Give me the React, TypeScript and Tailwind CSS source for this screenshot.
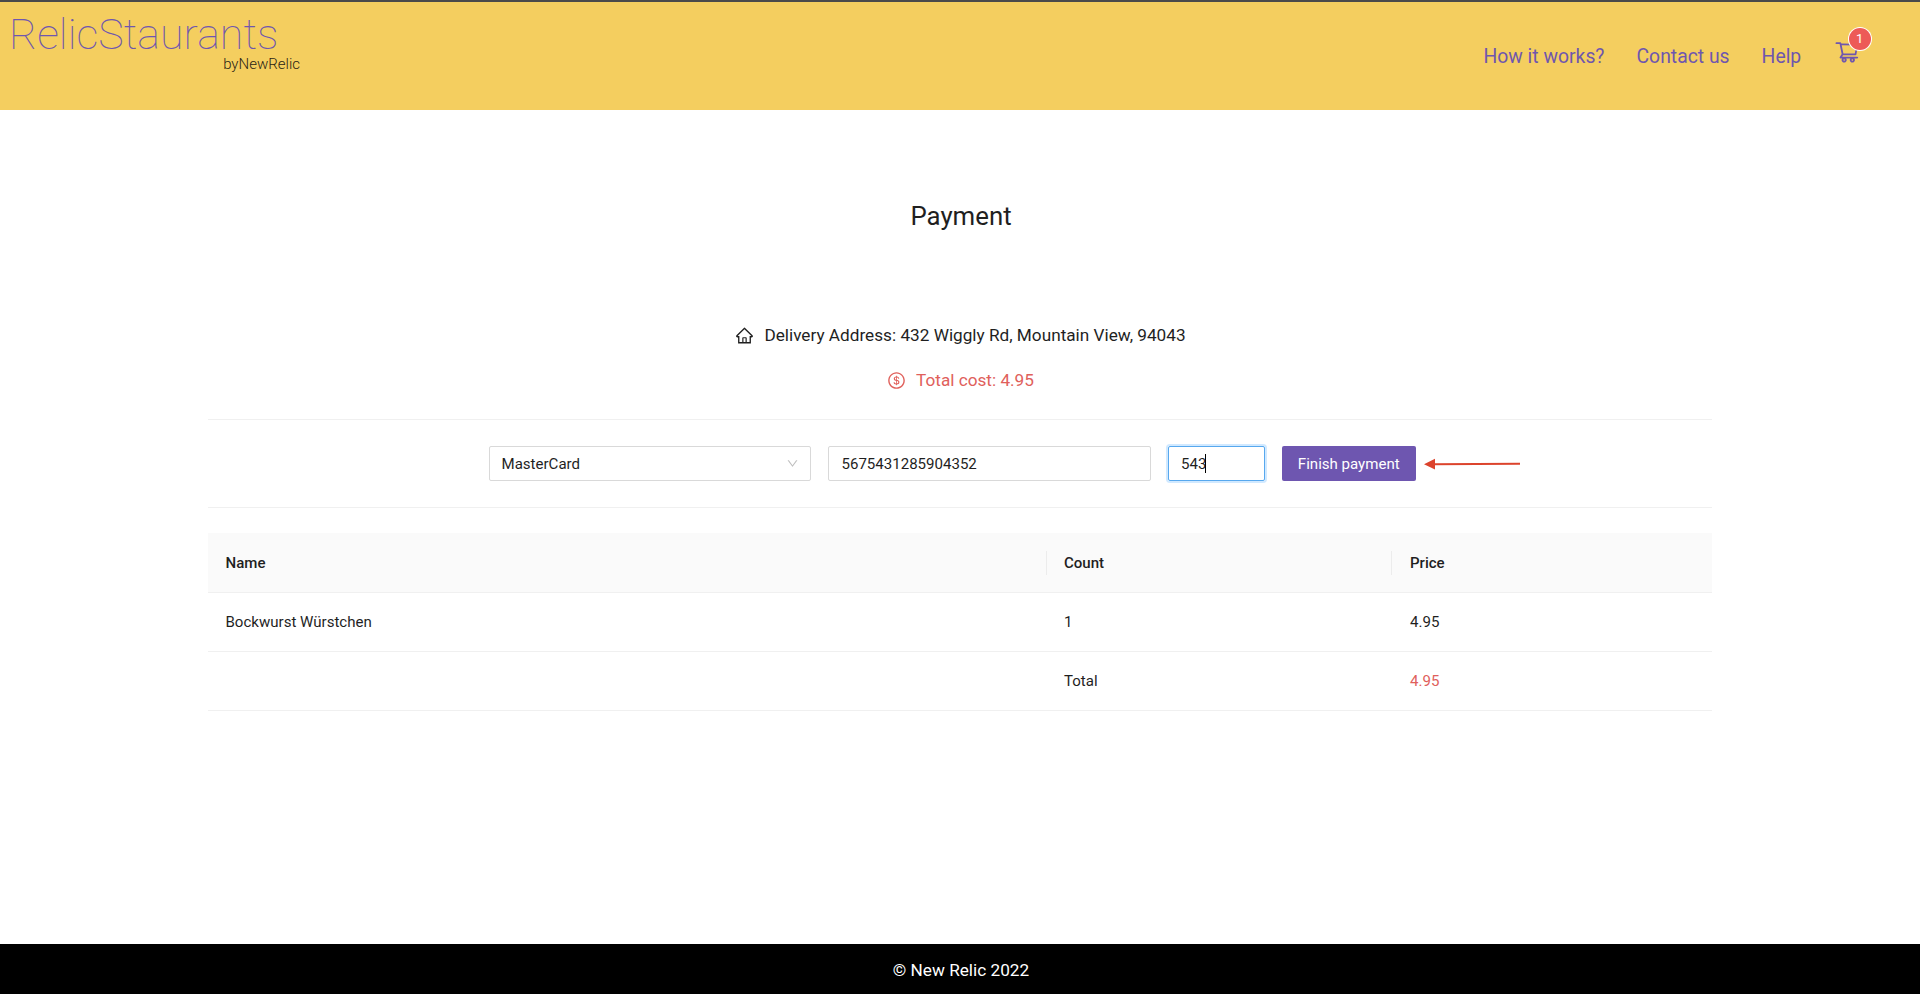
import React from "react";
import {
  AiOutlineDollar,
  AiOutlineDown,
  AiOutlineHome,
  AiOutlineShoppingCart,
} from "react-icons/ai";

const navLinks = ["How it works?", "Contact us", "Help"];

function Header() {
  return (
    <header className="flex h-[110px] justify-between border-t-2 border-[#4a4a4a] bg-[#f4ce5f]">
      <div className="flex w-[300px] flex-col pl-[9px] pt-[7px]">
        <div className="h-[50px] whitespace-nowrap text-[43px] leading-[50px] font-thin text-[#6f56ae]">
          RelicStaurants
        </div>
        <div className="-mt-[4px] h-[18px] text-right text-[15px] leading-[18px] font-light text-[#2b2415]">
          byNewRelic
        </div>
      </div>
      <nav className="flex items-center gap-[32px] pr-[60px] text-[19.35px] leading-6 text-[#6f56ae]">
        {navLinks.map((label) => (
          <a key={label} className="-ml-px mr-px whitespace-nowrap pt-[2px]">
            {label}
          </a>
        ))}
        <div className="relative -mt-[8px]">
          <AiOutlineShoppingCart className="h-[25.8px] w-[25.8px]" />
          <span className="absolute -top-[11px] left-[14.5px] flex h-[22px] w-[22px] items-center justify-center rounded-full bg-[#ed5a57] text-[12.9px] leading-none text-white ring-1 ring-white">
            1
          </span>
        </div>
      </nav>
    </header>
  );
}

function PaymentForm() {
  return (
    <form className="ml-[280.5px] flex h-[87px] items-center gap-[17px] text-[15.05px]">
      <div className="flex h-[34.4px] w-[322.5px] items-center justify-between rounded-[2px] border border-[#d9d9d9] pl-[12px] pr-[11px]">
        <span className="pt-px">MasterCard</span>
        <AiOutlineDown className="mt-px h-[13px] w-[13px] text-[#bfbfbf]" />
      </div>
      <div className="flex h-[34.4px] w-[322.5px] items-center rounded-[2px] border border-[#d9d9d9] pl-[12.5px] pt-px">
        5675431285904352
      </div>
      <div className="flex h-[34.4px] w-[97px] items-center rounded-[2px] border border-[#57a8ee] pl-[12.5px] pt-px shadow-[0_0_0_2px_rgba(24,144,255,0.2)]">
        543
        <span className="-ml-px h-[19px] w-px bg-black" />
      </div>
      <button
        type="button"
        className="h-[34.4px] w-[134.5px] rounded-[2px] bg-[#6e56b0] pt-px text-white"
      >
        Finish payment
      </button>
      <svg className="-ml-[9px] h-[12px] w-[97px]" viewBox="0 0 97 12">
        <path d="M0 6.2L11 0.8V11.6Z" fill="#dc432c" />
        <path d="M9 6.2L96 5.7" stroke="#dc432c" strokeWidth="2" fill="none" />
      </svg>
    </form>
  );
}

function OrderTable() {
  const columns = "grid grid-cols-[838.5px_345.5px_320px] items-center";
  return (
    <div className="mt-[25px] text-[15.05px]">
      <div className={columns + " h-[60px] border-b border-[#f0f0f0] bg-[#fafafa] font-medium"}>
        <div className="flex h-[24px] items-center border-r border-[#ececec] pl-[17.5px] pt-px">Name</div>
        <div className="flex h-[24px] items-center border-r border-[#ececec] pl-[17.5px] pt-px">Count</div>
        <div className="pl-[18px] pt-px">Price</div>
      </div>
      <div className={columns + " h-[59px] border-b border-[#f0f0f0]"}>
        <div className="pl-[17.5px]">Bockwurst Würstchen</div>
        <div className="pl-[17.5px]">1</div>
        <div className="pl-[18px]">4.95</div>
      </div>
      <div className={columns + " h-[59px] border-b border-[#f0f0f0]"}>
        <div />
        <div className="pl-[17.5px]">Total</div>
        <div className="pl-[18px] text-[#e0605b]">4.95</div>
      </div>
    </div>
  );
}

export default function App() {
  return (
    <div className="flex h-[994px] flex-col overflow-hidden bg-white font-['Roboto',sans-serif] text-[#1f1f1f]">
      <Header />
      <main className="mx-auto w-[1504px] flex-1">
        <h1 className="pl-[2px] pt-[88px] text-center text-[25.8px] leading-[36px]">Payment</h1>
        <div className="mt-[87px] flex h-[28px] items-center justify-center gap-[10px] pl-px text-[17.2px]">
          <AiOutlineHome className="h-[19px] w-[19px]" />
          <span className="pt-[2px]">Delivery Address: 432 Wiggly Rd, Mountain View, 94043</span>
        </div>
        <div className="mt-[17px] flex h-[28px] items-center justify-center gap-[10px] pl-px text-[17.2px] text-[#e0605b]">
          <AiOutlineDollar className="h-[19px] w-[19px]" />
          <span className="pt-[2px]">Total cost: 4.95</span>
        </div>
        <div className="mt-[25px] border-y border-[#f0f0f0]">
          <PaymentForm />
        </div>
        <OrderTable />
      </main>
      <footer className="flex h-[50.5px] items-center justify-center bg-black pl-[2px] pt-[4px] text-[17.2px] text-white">
        © New Relic 2022
      </footer>
    </div>
  );
}
